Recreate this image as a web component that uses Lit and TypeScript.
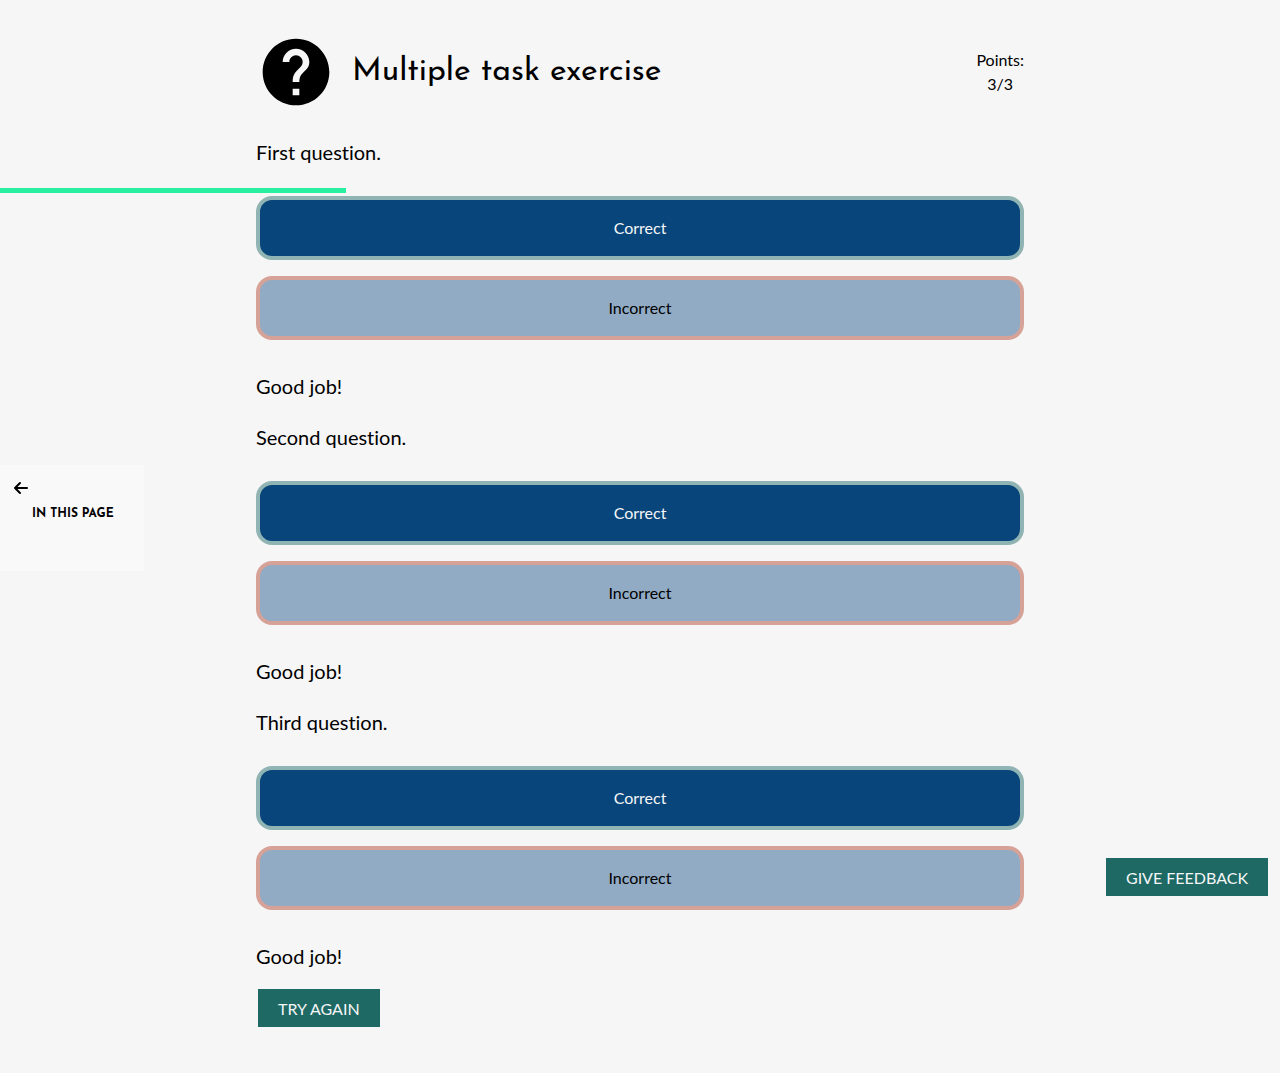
import { LitElement, css, html } from "lit";
import { customElement, property } from "lit/decorators.js";
import { styleMap } from "lit/directives/style-map.js";

@customElement("quiz-question")
export class QuizQuestion extends LitElement {
  static styles = css`
    :host {
      display: block;
    }
    .question,
    .feedback {
      margin: 0;
      font-size: 20px;
      line-height: 28px;
    }
    .options {
      display: flex;
      flex-direction: column;
      gap: 16px;
      margin: 30px 0 32px;
    }
    .option {
      padding: 16px;
      border: 4px solid;
      border-radius: 16px;
      font: inherit;
      font-size: 16px;
      line-height: 24px;
      cursor: pointer;
    }
    .correct {
      background: #08457a;
      border-color: #8fb4b3;
      color: #f5f6f7;
    }
    .incorrect {
      background: #91abc4;
      border-color: #d6a298;
      color: #000;
    }
  `;

  @property() text = "";

  render() {
    return html`
      <p class="question">${this.text}</p>
      <div class="options">
        <button class="option correct" type="button">Correct</button>
        <button class="option incorrect" type="button">Incorrect</button>
      </div>
      <p class="feedback">Good job!</p>
    `;
  }
}

@customElement("app-root")
export class AppRoot extends LitElement {
  static styles = css`
    :host {
      display: block;
      min-height: 100vh;
      background: #f6f6f6;
      color: #000;
      font-family: Lato, "Open Sans", sans-serif;
      font-variant-ligatures: none;
    }
    .exercise {
      box-sizing: border-box;
      width: 60%;
      margin: 0 auto;
      padding: 32px 0 46px;
    }
    .header {
      display: flex;
      align-items: center;
      gap: 16px;
      margin-bottom: 26px;
    }
    .help {
      flex: none;
      width: 80px;
      height: 80px;
    }
    .title {
      flex: 1;
      margin: 0;
      font-family: "Josefin Sans", Lato, sans-serif;
      font-size: 32px;
      font-weight: 400;
      line-height: 40px;
    }
    .points {
      margin: 0;
      font-size: 16px;
      line-height: 24px;
      text-align: center;
    }
    .questions {
      display: flex;
      flex-direction: column;
      gap: 23px;
    }
    .action {
      padding: 8px 20px 6px;
      border: 0;
      background: #1f6964;
      color: #f5f6f7;
      font: inherit;
      font-size: 16px;
      line-height: 24px;
      text-transform: uppercase;
      cursor: pointer;
    }
    .retry {
      margin: 19px 2px 0;
    }
    .give-feedback {
      position: fixed;
      right: 12px;
      bottom: 177px;
    }
    .progress {
      position: fixed;
      top: 188px;
      left: 0;
      height: 5px;
      background: #28f0a0;
    }
    .contents {
      position: fixed;
      top: 465px;
      left: 0;
      box-sizing: border-box;
      padding: 14px 30px 48px 12px;
      background: #f9f9f9;
    }
    .collapse {
      display: block;
      padding: 0;
      border: 0;
      background: none;
      cursor: pointer;
    }
    .arrow {
      display: block;
      width: 18px;
      height: 18px;
    }
    .contents-title {
      margin: 8px 0 0 20px;
      font-family: "Josefin Sans", Lato, sans-serif;
      font-size: 12px;
      font-weight: 700;
      line-height: 18px;
      text-transform: uppercase;
      white-space: nowrap;
    }
  `;

  private questions = ["First question.", "Second question.", "Third question."];
  private progress = 27;

  render() {
    return html`
      <main class="exercise">
        <header class="header">
          <svg class="help" viewBox="0 0 24 24" aria-hidden="true">
            <path
              d="M12 2C6.48 2 2 6.48 2 12s4.48 10 10 10 10-4.48 10-10S17.52 2 12 2zm1 17h-2v-2h2v2zm2.07-7.75-.9.92C13.45 12.9 13 13.5 13 15h-2v-.5c0-1.1.45-2.1 1.17-2.83l1.24-1.26c.37-.36.59-.86.59-1.41 0-1.1-.9-2-2-2s-2 .9-2 2H8c0-2.21 1.79-4 4-4s4 1.79 4 4c0 .88-.36 1.68-.93 2.25z"
            />
          </svg>
          <h1 class="title">Multiple task exercise</h1>
          <p class="points">Points:<br />3/3</p>
        </header>
        <div class="questions">
          ${this.questions.map((text) => html`<quiz-question .text=${text}></quiz-question>`)}
        </div>
        <button class="action retry" type="button">Try again</button>
      </main>
      <div class="progress" style=${styleMap({ width: `${this.progress}%` })}></div>
      <nav class="contents" aria-labelledby="contents-title">
        <button class="collapse" type="button" aria-label="Collapse contents">
          <svg class="arrow" viewBox="0 0 18 18" aria-hidden="true">
            <path
              d="M8 4 3 9l5 5M3 9h12"
              fill="none"
              stroke="#000"
              stroke-width="2"
              stroke-linecap="round"
              stroke-linejoin="round"
            />
          </svg>
        </button>
        <h2 class="contents-title" id="contents-title">In this page</h2>
      </nav>
      <button class="action give-feedback" type="button">Give feedback</button>
    `;
  }
}
